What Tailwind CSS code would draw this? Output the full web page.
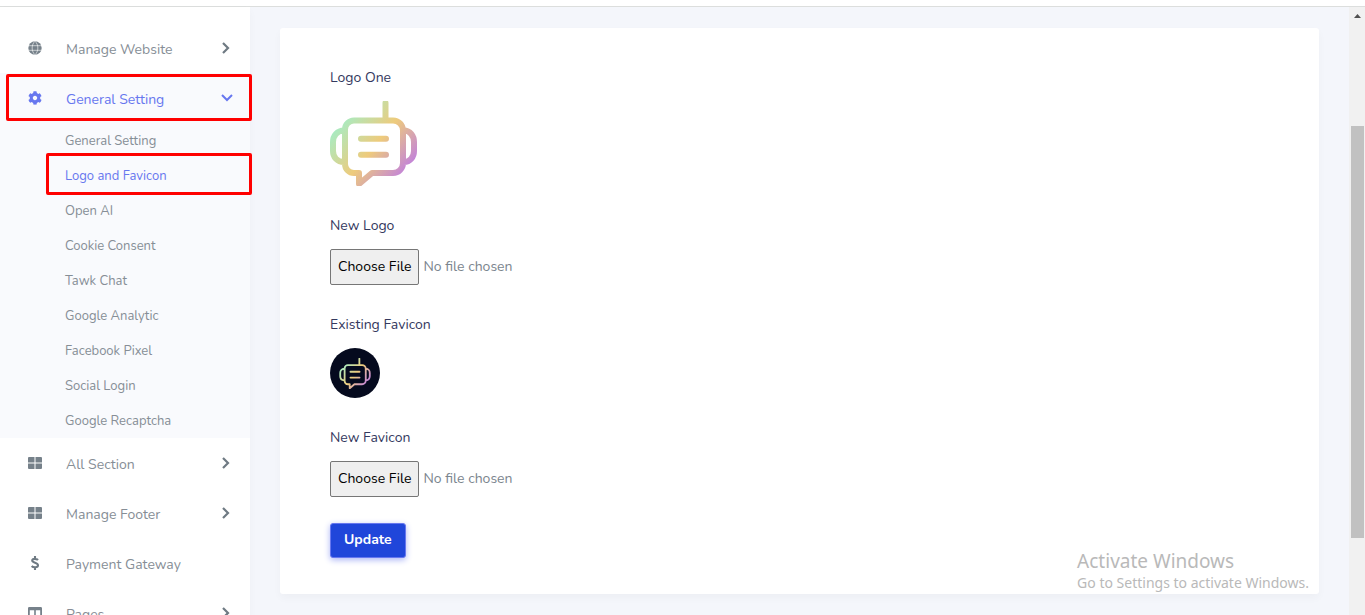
<!DOCTYPE html>
<html lang="en">
<head>
<meta charset="utf-8">
<meta name="viewport" content="width=device-width, initial-scale=1">
<title>Logo and Favicon</title>
<script src="https://cdn.jsdelivr.net/npm/@tailwindcss/browser@4"></script>
</head>
<body class="flex h-screen flex-col overflow-hidden bg-[#f4f6fb] font-['Nunito','Noto_Sans',sans-serif] text-[#34395e]">

<svg class="absolute size-0" aria-hidden="true">
  <defs>
    <linearGradient id="g" gradientUnits="userSpaceOnUse" x1="10" y1="18" x2="78" y2="74">
      <stop offset="0" stop-color="#a4edc6"/>
      <stop offset=".5" stop-color="#eecb7c"/>
      <stop offset="1" stop-color="#bf7de2"/>
    </linearGradient>
    <symbol id="bot" viewBox="0 0 87 85">
      <g fill="none" stroke="url(#g)" stroke-linejoin="round" stroke-linecap="round">
        <path d="M55.500 2V19M24 19.500H63a10 10 0 0 1 10 10V62a10 10 0 0 1-10 10H42L29 83V72H24a9 9 0 0 1-9-9V28.500a9 9 0 0 1 9-9ZM14 29.500C7 29.500 3 35 3 41V50C3 56 7 61 14 61M74 29.500C80 29.500 84 35 84 41V50C84 56 80 61 74 61M31 37.700H56M31 53.700H56"/>
      </g>
    </symbol>
    <symbol id="right" viewBox="0 0 10 12"><path d="M3 1 8 6 3 11" fill="none" stroke="#6f7a83" stroke-width="2.200"/></symbol>
    <symbol id="large" viewBox="0 0 14 12"><path fill="currentColor" d="M1 0H6.500V5.500H0V1a1 1 0 0 1 1-1ZM7.500 0H13a1 1 0 0 1 1 1V5.500H7.500ZM0 6.500H6.500V12H1a1 1 0 0 1-1-1ZM7.500 6.500H14V11a1 1 0 0 1-1 1H7.500Z"/></symbol>
  </defs>
</svg>

<header class="h-[7px] shrink-0 border-b border-[#dcdedd] bg-white"></header>

<div class="flex min-h-0 flex-1">
  <nav class="relative z-10 w-[250px] shrink-0 bg-white pt-4 text-sm text-[#868e96] shadow-[0_4px_8px_rgba(0,0,0,0.03)]">
    <ul>
      <li><a href="#" class="flex h-[50px] items-center pr-5 pl-7">
        <svg class="mr-6 h-[14px] w-[14px]" viewBox="0 0 14 14"><circle cx="7" cy="7" r="6.700" fill="#76818a"/><path d="M0 4.700H14M0 9.300H14M7 .3C3.200 3.500 3.200 10.500 7 13.700M7 .3C10.800 3.500 10.800 10.500 7 13.700" fill="none" stroke="#fff" stroke-width=".6"/></svg>
        <span class="flex-1 pt-[3px]">Manage Website</span>
        <svg class="h-3 w-[10px]"><use href="#right"/></svg></a></li>
      <li class="bg-[#f9fafd]">
        <a href="#" class="relative flex h-[50px] items-center pr-[17px] pl-7 text-[#6777ef]">
          <svg class="mr-6 h-[14px] w-[14px]" viewBox="0 0 512 512"><path fill="currentColor" d="M487.400 315.700l-42.600-24.600c4.300-23.200 4.300-47 0-70.200l42.600-24.600c4.900-2.800 7.100-8.600 5.500-14-11.100-35.600-30-67.800-54.700-94.600-3.800-4.100-10-5.100-14.800-2.300L380.800 110c-17.900-15.400-38.500-27.300-60.800-35.100V25.800c0-5.600-3.900-10.500-9.400-11.700-36.700-8.200-74.300-7.800-109.200 0-5.500 1.200-9.400 6.100-9.400 11.700V75c-22.200 7.900-42.800 19.800-60.800 35.100L88.700 85.500c-4.900-2.800-11-1.900-14.800 2.300-24.700 26.700-43.600 58.900-54.700 94.600-1.700 5.400.6 11.200 5.500 14L67.300 221c-4.300 23.200-4.300 47 0 70.200l-42.600 24.600c-4.900 2.800-7.100 8.600-5.500 14 11.100 35.600 30 67.800 54.700 94.600 3.800 4.100 10 5.100 14.800 2.300l42.600-24.600c17.900 15.400 38.500 27.300 60.800 35.100v49.200c0 5.600 3.900 10.500 9.400 11.700 36.700 8.200 74.300 7.800 109.200 0 5.500-1.200 9.400-6.100 9.400-11.700v-49.200c22.200-7.900 42.800-19.800 60.800-35.100l42.600 24.600c4.900 2.800 11 1.900 14.800-2.300 24.700-26.700 43.600-58.900 54.700-94.600 1.500-5.500-.7-11.300-5.600-14.100zM256 336c-44.100 0-80-35.900-80-80s35.900-80 80-80 80 35.900 80 80-35.900 80-80 80z"/></svg>
          <span class="flex-1 pt-[3px]">General Setting</span>
          <svg class="h-2 w-3" viewBox="0 0 12 8"><path d="M1 1 6 6 11 1" fill="none" stroke="currentColor" stroke-width="2"/></svg>
          <span class="absolute top-px -right-0.5 left-1.5 h-[47px] rounded-xs border-3 border-[#f00]"></span>
        </a>
        <ul class="text-[13px]">
          <li><a href="#" class="flex h-[35px] items-center pt-0.5 pl-[65px]">General Setting</a></li>
          <li><a href="#" class="relative flex h-[35px] items-center pt-0.5 pl-[65px] text-[#6777ef]">Logo and Favicon<span class="absolute -top-[5px] -right-0.5 left-[46px] h-[42px] rounded-xs border-3 border-[#f00]"></span></a></li>
          <li><a href="#" class="flex h-[35px] items-center pt-0.5 pl-[65px]">Open AI</a></li>
          <li><a href="#" class="flex h-[35px] items-center pt-0.5 pl-[65px]">Cookie Consent</a></li>
          <li><a href="#" class="flex h-[35px] items-center pt-0.5 pl-[65px]">Tawk Chat</a></li>
          <li><a href="#" class="flex h-[35px] items-center pt-0.5 pl-[65px]">Google Analytic</a></li>
          <li><a href="#" class="flex h-[35px] items-center pt-0.5 pl-[65px]">Facebook Pixel</a></li>
          <li><a href="#" class="flex h-[35px] items-center pt-0.5 pl-[65px]">Social Login</a></li>
          <li><a href="#" class="flex h-[35px] items-center pt-0.5 pl-[65px]">Google Recaptcha</a></li>
        </ul>
      </li>
      <li><a href="#" class="flex h-[50px] items-center pr-5 pl-7">
        <svg class="mr-6 h-3 w-[14px] text-[#76818a]"><use href="#large"/></svg>
        <span class="flex-1 pt-[3px]">All Section</span>
        <svg class="h-3 w-[10px]"><use href="#right"/></svg></a></li>
      <li><a href="#" class="flex h-[50px] items-center pr-5 pl-7">
        <svg class="mr-6 h-3 w-[14px] text-[#76818a]"><use href="#large"/></svg>
        <span class="flex-1 pt-[3px]">Manage Footer</span>
        <svg class="h-3 w-[10px]"><use href="#right"/></svg></a></li>
      <li><a href="#" class="flex h-[50px] items-center pr-5 pl-7">
        <svg class="mr-6 h-[14px] w-[14px]" viewBox="0 0 14 14"><path d="M7 0V2.500M7 11.500V14M10 4C9 2.700 4.200 2 4.200 4.600 4.200 7.300 10 6.400 10 9.300 10 12 5 11.700 3.700 10" fill="none" stroke="#6f7a83" stroke-width="2.100"/></svg>
        <span class="flex-1 pt-[3px]">Payment Gateway</span></a></li>
      <li><a href="#" class="flex h-[50px] items-center pr-5 pl-7">
        <svg class="mr-6 h-3 w-[14px]" viewBox="0 0 14 12"><path fill="#76818a" fill-rule="evenodd" d="M1.300 0H12.700A1.300 1.300 0 0 1 14 1.300V10.700A1.300 1.300 0 0 1 12.700 12H1.300A1.300 1.300 0 0 1 0 10.700V1.300A1.300 1.300 0 0 1 1.300 0ZM1.800 3.200V10.300H6.200V3.200ZM7.800 3.200V10.300H12.200V3.200Z"/></svg>
        <span class="flex-1 pt-[3px]">Pages</span>
        <svg class="h-3 w-[10px]"><use href="#right"/></svg></a></li>
    </ul>
  </nav>

  <main class="min-w-0 flex-1 px-[30px] pt-[21px]">
    <form class="rounded-[3px] bg-white px-[50px] pt-10 pb-9 text-sm shadow-[0_4px_8px_rgba(0,0,0,0.03)]">
      <p>Logo One</p>
      <svg class="mt-[13px] h-[85px] w-[87px] stroke-6" role="img" aria-label="Current logo"><use href="#bot"/></svg>
      <label for="logo" class="mt-[30px] block">New Logo</label>
      <input id="logo" type="file" class="mt-[13px] block h-9 w-full text-[#7b858e] file:mr-1 file:h-9 file:rounded-xs file:border file:border-solid file:border-[#767676] file:bg-[#efefef] file:px-[7px] file:text-black">
      <p class="mt-[30px]">Existing Favicon</p>
      <div class="mt-[13px] flex size-[50px] items-center justify-center rounded-full bg-[#050a1e]"><svg class="h-[31px] w-8 stroke-5" role="img" aria-label="Current favicon"><use href="#bot"/></svg></div>
      <label for="favicon" class="mt-[30px] block">New Favicon</label>
      <input id="favicon" type="file" class="mt-[13px] block h-9 w-full text-[#7b858e] file:mr-1 file:h-9 file:rounded-xs file:border file:border-solid file:border-[#767676] file:bg-[#efefef] file:px-[7px] file:text-black">
      <button type="submit" class="mt-[26px] block h-[35px] rounded-[3px] border border-[#6777ef] bg-[#2046da] px-[13px] pb-0.5 font-bold text-white shadow-[0_2px_6px_#acb5f6]">Update</button>
    </form>
  </main>

  <div class="w-4 shrink-0 bg-[#f1f1f1]" aria-hidden="true">
    <svg class="mx-auto mt-[7px] h-1 w-[7px]" viewBox="0 0 7 4"><path d="M3.500 0 7 4H0Z" fill="#505050"/></svg>
    <div class="mt-[108px] mr-px ml-0.5 h-[412px] bg-[#c1c1c1]"></div>
  </div>
</div>

<div class="absolute right-14 bottom-6 font-['Segoe_UI','Noto_Sans',sans-serif] text-[#b9b9b9]">
  <p class="text-[19px] leading-7">Activate Windows</p>
  <p class="text-sm leading-4">Go to Settings to activate Windows.</p>
</div>
</body>
</html>
